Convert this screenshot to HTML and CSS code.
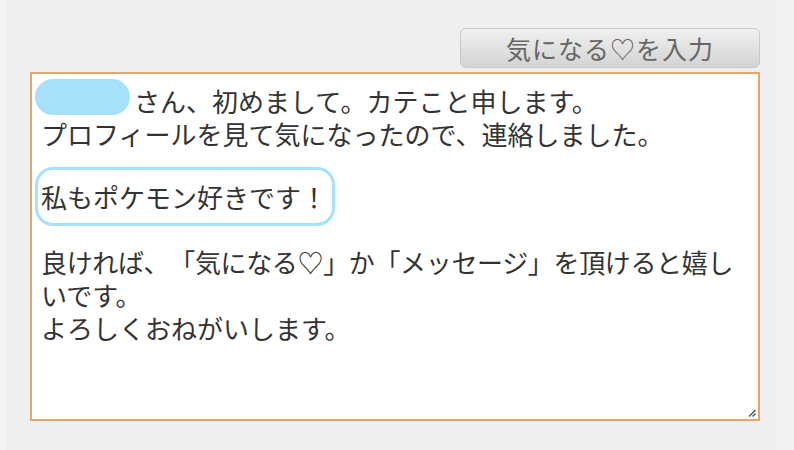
FILE: index.html
```html
<!DOCTYPE html>
<html>
<head>
    <title>メッセージ入力</title>
    <meta charset="UTF-8">
    <link rel="stylesheet" href="styles.css">
</head>
<body>
    <div class="page">
        <div class="toolbar">
            <button class="fav-button">気になる♡を入力</button>
        </div>

        <div class="message-box">
            <div class="line first-line">
                <span class="name-blob"></span>
                <span>さん、初めまして。カテこと申します。</span>
            </div>
            <div class="line">プロフィールを見て気になったので、連絡しました。</div>

            <div class="highlight">私もポケモン好きです！</div>

            <div class="closing">
                <div class="line tight">良ければ、「気になる♡」か「メッセージ」を頂けると嬉し</div>
                <div class="line">いです。</div>
                <div class="line">よろしくおねがいします。</div>
            </div>

            <svg class="grip" width="8" height="8" viewBox="0 0 8 8">
                <line x1="1" y1="7.5" x2="7.5" y2="1" stroke="#555" stroke-width="1.4"/>
                <line x1="4.5" y1="7.5" x2="7.5" y2="4.5" stroke="#555" stroke-width="1.4"/>
            </svg>
        </div>
    </div>
</body>
</html>
```

FILE: styles.css
```css
body {
    margin: 0;
    background: #f3f3f3;
    font-family: "Noto Sans CJK JP", "Noto Sans", sans-serif;
    color: #333;
    text-spacing-trim: space-all;
}
.page {
    margin: 0 18px 0 5px;
    height: 450px;
    background: #efefef;
    padding-top: 28px;
    box-sizing: border-box;
}
.toolbar {
    display: flex;
    justify-content: flex-end;
    padding-right: 16px;
}
.fav-button {
    width: 300px;
    height: 40px;
    border: 1px solid #c9c9c9;
    border-radius: 6px;
    background: linear-gradient(#f0f0f0, #d3d3d3);
    color: #666;
    font-family: inherit;
    font-size: 25px;
    letter-spacing: 1px;
    line-height: 38px;
    padding: 0;
    text-spacing-trim: space-all;
}
.message-box {
    position: relative;
    margin: 4px 16px 0 25px;
    height: 349px;
    box-sizing: border-box;
    border: 2px solid #e0a86c;
    background: #fff;
    padding: 10px 10px 0 9px;
    font-size: 26px;
}
.line {
    height: 33px;
    line-height: 33px;
    white-space: nowrap;
}
.tight {
    letter-spacing: -0.35px;
}
.first-line {
    display: flex;
}
.name-blob {
    align-self: flex-start;
    width: 95px;
    height: 36px;
    margin: -5px 4px 0 -6px;
    border-radius: 18px;
    background: #a6e0f9;
}
.highlight {
    display: inline-block;
    margin: 17px 0 0 -6px;
    padding: 10px 5px 10px 3px;
    line-height: 33px;
    border: 3px solid #a6e0f9;
    border-radius: 18px;
}
.closing {
    margin-top: 19px;
}
.grip {
    position: absolute;
    right: 2px;
    bottom: 2px;
}
```
